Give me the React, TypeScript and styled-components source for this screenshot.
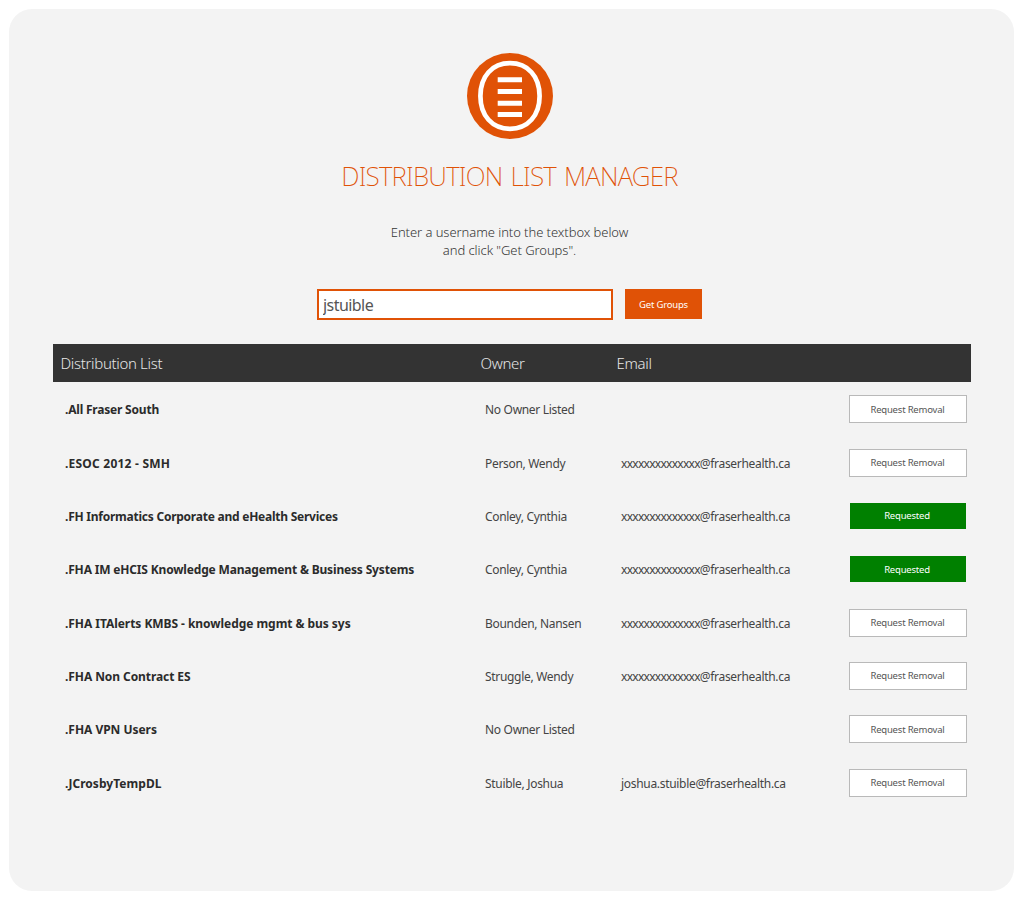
import React, { useState } from 'react';
import styled, { createGlobalStyle } from 'styled-components';

const orange = '#e05206';

const GlobalStyle = createGlobalStyle`
  * { box-sizing: border-box; }
  body {
    margin: 0;
    background: #fff;
    color: #333;
    font-family: "Noto Sans", "Open Sans", sans-serif;
  }
`;

const Page = styled.div`
  height: 902px;
  padding: 9px 10px 11px 9px;
`;

const Panel = styled.main`
  height: 882px;
  padding: 44px 43.5px 0;
  display: flex;
  flex-direction: column;
  align-items: center;
  border-radius: 23px;
  background: #f3f3f3;
`;

const Logo = styled.svg`
  display: block;
  width: 86px;
  height: 86px;
  margin-right: 4px;
`;

const Title = styled.h1`
  margin: 19px 4px 0 0;
  font-size: 26px;
  line-height: 36px;
  font-weight: 200;
  letter-spacing: -0.75px;
  word-spacing: 2px;
  white-space: nowrap;
  color: ${orange};
`;

const Hint = styled.p`
  margin: 29px 4px 0 0;
  font-size: 13px;
  line-height: 18px;
  font-weight: 300;
  letter-spacing: -0.06px;
  text-align: center;
  color: #333;
`;

const SearchForm = styled.form`
  display: flex;
  gap: 12px;
  margin: 30px 4px 0 0;
`;

const NameInput = styled.input`
  width: 296px;
  height: 31px;
  padding: 0 4px;
  border: 2px solid ${orange};
  border-radius: 0;
  outline: none;
  background: #fff;
  color: #555;
  font: 400 16px "Noto Sans", sans-serif;
  letter-spacing: -0.55px;
`;

const SubmitButton = styled.button`
  width: 77px;
  height: 30px;
  padding: 0;
  border: 0;
  background: ${orange};
  color: #fff;
  font: 400 9.5px "Noto Sans", sans-serif;
  letter-spacing: -0.2px;
`;

const Table = styled.div`
  width: 918px;
  margin-top: 24px;
`;

const columns = '420px 136px 232px 118px';

const HeaderRow = styled.div`
  display: grid;
  grid-template-columns: ${columns};
  align-items: center;
  height: 38px;
  padding: 0 8px;
  background: #333;
  color: #e6e6e6;
  font-size: 15px;
  font-weight: 300;
  letter-spacing: -0.33px;
`;

const Row = styled.div`
  display: grid;
  grid-template-columns: ${columns};
  align-items: center;
  height: 53.35px;
  padding-left: 12.5px;
  font-size: 12px;
`;

const ListName = styled.span<{ $tracking: number }>`
  padding-top: 2px;
  font-weight: 700;
  letter-spacing: ${p => p.$tracking}px;
  color: #2b2b2b;
`;

const Cell = styled.span`
  padding-top: 2px;
  letter-spacing: -0.31px;
  color: #444;
`;

const Mask = styled.span`
  letter-spacing: -0.72px;
`;

const RequestButton = styled.button<{ $requested: boolean }>`
  justify-self: center;
  width: ${p => (p.$requested ? 116 : 118)}px;
  height: ${p => (p.$requested ? 26 : 28)}px;
  margin: 1px 0 0 -8px;
  padding: 0 ${p => (p.$requested ? 2 : 1)}px 0 0;
  border: ${p => (p.$requested ? '0' : '1px solid #b9b9b9')};
  background: ${p => (p.$requested ? '#008000' : '#fff')};
  color: ${p => (p.$requested ? '#fff' : '#555')};
  font: 400 9.5px "Noto Sans", sans-serif;
  letter-spacing: -0.2px;
`;

const masked = { mask: 'xxxxxxxxxxxxxx', address: '@fraserhealth.ca' };
const none = { mask: '', address: '' };

const lists = [
  { name: '.All Fraser South', tracking: -0.2, owner: 'No Owner Listed', email: none, requested: false },
  { name: '.ESOC 2012 - SMH', tracking: 0.22, owner: 'Person, Wendy', email: masked, requested: false },
  { name: '.FH Informatics Corporate and eHealth Services', tracking: -0.24, owner: 'Conley, Cynthia', email: masked, requested: true },
  { name: '.FHA IM eHCIS Knowledge Management & Business Systems', tracking: -0.17, owner: 'Conley, Cynthia', email: masked, requested: true },
  { name: '.FHA ITAlerts KMBS - knowledge mgmt & bus sys', tracking: -0.05, owner: 'Bounden, Nansen', email: masked, requested: false },
  { name: '.FHA Non Contract ES', tracking: -0.08, owner: 'Struggle, Wendy', email: masked, requested: false },
  { name: '.FHA VPN Users', tracking: -0.03, owner: 'No Owner Listed', email: none, requested: false },
  { name: '.JCrosbyTempDL', tracking: 0.04, owner: 'Stuible, Joshua', email: { mask: '', address: 'joshua.stuible@fraserhealth.ca' }, requested: false },
];

export default function App() {
  const [username, setUsername] = useState('jstuible');
  return (
    <Page>
      <GlobalStyle />
      <Panel>
        <Logo viewBox="0 0 86 86">
          <circle cx="43" cy="43" r="43" fill={orange} />
          <path
            d="M43 10.2C60.8 10.2 72.6 23.3 72.6 43S60.8 75.8 43 75.8 13.4 62.7 13.4 43 25.2 10.2 43 10.2Z"
            fill="none"
            stroke="#fff"
            strokeWidth="4.7"
          />
          <path d="M30.7 26.7h24.3M30.7 38.4h24.3M30.7 50.2h24.3M30.7 61.4h24.3" stroke="#fff" strokeWidth="5" />
        </Logo>
        <Title>DISTRIBUTION LIST MANAGER</Title>
        <Hint>
          Enter a username into the textbox below
          <br />
          and click "Get Groups".
        </Hint>
        <SearchForm onSubmit={e => e.preventDefault()}>
          <NameInput value={username} onChange={e => setUsername(e.target.value)} />
          <SubmitButton type="submit">Get Groups</SubmitButton>
        </SearchForm>
        <Table>
          <HeaderRow>
            <span>Distribution List</span>
            <span>Owner</span>
            <span>Email</span>
          </HeaderRow>
          {lists.map(l => (
            <Row key={l.name}>
              <ListName $tracking={l.tracking}>{l.name}</ListName>
              <Cell>{l.owner}</Cell>
              <Cell>
                <Mask>{l.email.mask}</Mask>
                {l.email.address}
              </Cell>
              <RequestButton $requested={l.requested}>{l.requested ? 'Requested' : 'Request Removal'}</RequestButton>
            </Row>
          ))}
        </Table>
      </Panel>
    </Page>
  );
}
